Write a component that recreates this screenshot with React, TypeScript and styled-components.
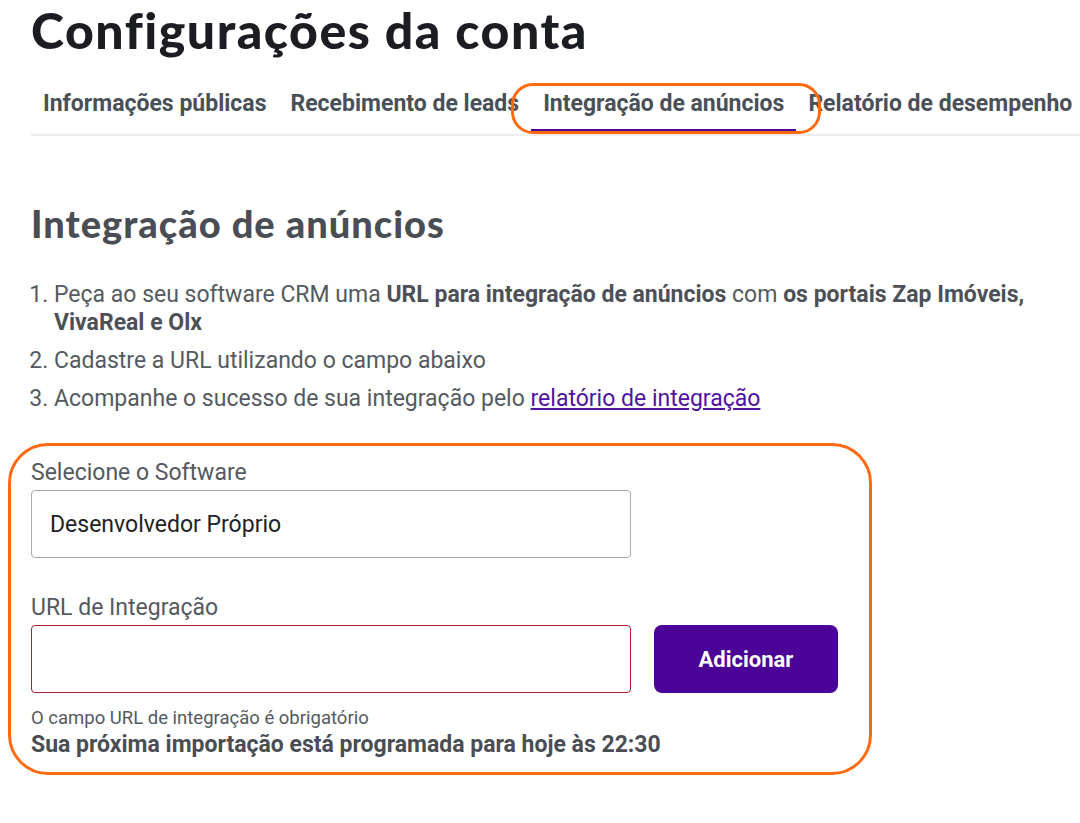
import React from 'react';
import styled, { createGlobalStyle } from 'styled-components';

const GlobalStyle = createGlobalStyle`
  body {
    margin: 0;
    background: #fff;
    font-family: Roboto, 'Liberation Sans', sans-serif;
  }
`;

const Page = styled.div`
  padding: 0 0 0 31px;
  width: 1049px;
`;

const Title = styled.h1`
  margin: 0;
  font-family: Lato, 'Noto Sans', sans-serif;
  font-weight: 900;
  font-size: 50px;
  line-height: 60px;
  letter-spacing: 1.5px;
  color: #1b1d23;
`;

const TabBar = styled.nav`
  position: relative;
  display: flex;
  margin-top: 22px;
  padding-bottom: 2px;
  border-bottom: 2px solid #eeeeee;
`;

const Tab = styled.button<{ $active?: boolean }>`
  flex-shrink: 0;
  background: transparent;
  border: none;
  padding: 8px 12px 12px;
  font-family: Roboto, sans-serif;
  font-size: 23px;
  line-height: 27px;
  font-weight: 700;
  color: #4a5058;
  white-space: nowrap;
  border-bottom: 3px solid ${p => (p.$active ? '#4b0296' : 'transparent')};
  cursor: pointer;
`;

const TabHighlight = styled.div`
  position: absolute;
  left: 480px;
  top: 1px;
  box-sizing: border-box;
  width: 310px;
  height: 51px;
  border: 3px solid #ff6a0f;
  border-radius: 22px;
  pointer-events: none;
`;

const SectionTitle = styled.h2`
  margin: 65px 0 0;
  font-family: Lato, 'Noto Sans', sans-serif;
  font-weight: 900;
  font-size: 38px;
  line-height: 44px;
  letter-spacing: 1px;
  color: #4a4e54;
`;

const Steps = styled.ol`
  margin: 36px 0 0;
  padding: 0 0 0 23px;
  width: 1006px;
  font-size: 23px;
  line-height: 28px;
  color: #555a60;

  li {
    margin-bottom: 10px;
  }

  b {
    font-weight: 700;
    color: #4d5157;
  }
`;

const Link = styled.a`
  color: #5212a0;
  text-decoration: underline;
`;

const Highlight = styled.section`
  margin: 30px 0 0 -23px;
  box-sizing: border-box;
  width: 864px;
  padding: 13px 0 14px 20px;
  border: 3px solid #ff6a0f;
  border-radius: 40px;
`;

const Label = styled.label`
  display: block;
  font-size: 23px;
  line-height: 28px;
  color: #55595f;
  margin-bottom: 3px;
`;

const Field = styled.div<{ $error?: boolean }>`
  box-sizing: border-box;
  width: 600px;
  height: 68px;
  border: 1px solid ${p => (p.$error ? '#b0202a' : '#a9a9a9')};
  border-radius: 4px;
  padding: 0 18px;
  display: flex;
  align-items: center;
  font-size: 23px;
  color: #1e2126;
`;

const Group = styled.div`
  margin-bottom: 36px;
`;

const Row = styled.div`
  display: flex;
  gap: 23px;
`;

const AddButton = styled.button`
  width: 184px;
  height: 68px;
  border: none;
  border-radius: 8px;
  background: #4b0296;
  color: #fff;
  font-family: Roboto, sans-serif;
  font-size: 22px;
  font-weight: 700;
  cursor: pointer;
`;

const Helper = styled.div`
  margin-top: 14px;
  font-size: 18.5px;
  line-height: 22px;
  color: #55595f;
`;

const Schedule = styled.div`
  margin-top: 2px;
  font-size: 23px;
  line-height: 27px;
  font-weight: 700;
  color: #4a4e54;
`;

const tabs = ['Informações públicas', 'Recebimento de leads', 'Integração de anúncios', 'Relatório de desempenho'];

export default function App() {
  return (
    <>
      <GlobalStyle />
      <Page>
        <Title>Configurações da conta</Title>
        <TabBar>
          {tabs.map((t, i) => (
            <Tab key={t} $active={i === 2}>
              {t}
            </Tab>
          ))}
          <TabHighlight />
        </TabBar>

        <SectionTitle>Integração de anúncios</SectionTitle>
        <Steps>
          <li>
            Peça ao seu software CRM uma <b>URL para integração de anúncios</b> com{' '}
            <b>os portais Zap Imóveis, VivaReal e Olx</b>
          </li>
          <li>Cadastre a URL utilizando o campo abaixo</li>
          <li>
            Acompanhe o sucesso de sua integração pelo <Link href="#">relatório de integração</Link>
          </li>
        </Steps>

        <Highlight>
          <Group>
            <Label>Selecione o Software</Label>
            <Field>Desenvolvedor Próprio</Field>
          </Group>
          <Label>URL de Integração</Label>
          <Row>
            <Field $error />
            <AddButton>Adicionar</AddButton>
          </Row>
          <Helper>O campo URL de integração é obrigatório</Helper>
          <Schedule>Sua próxima importação está programada para hoje às 22:30</Schedule>
        </Highlight>
      </Page>
    </>
  );
}
